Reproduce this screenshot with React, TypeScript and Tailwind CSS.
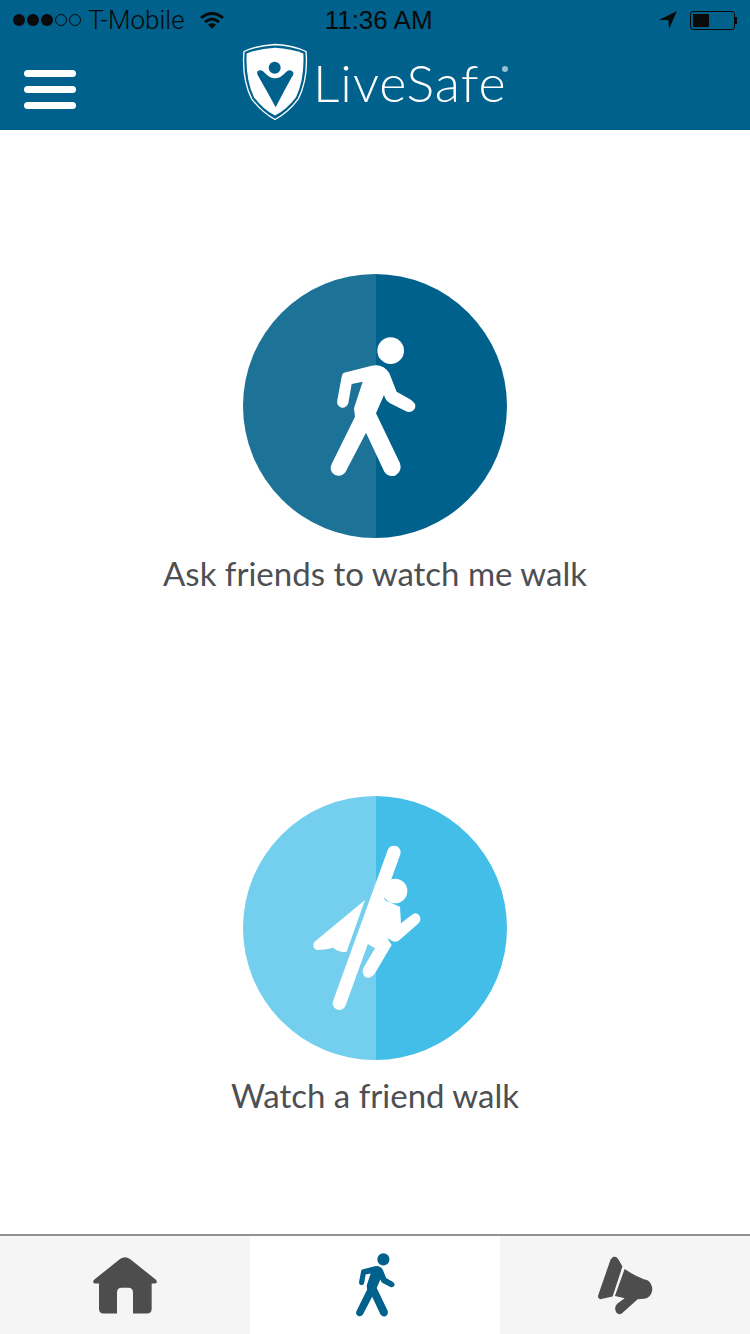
const lato = { fontFamily: '"Lato", "Noto Sans", sans-serif' }

function StatusBar() {
  return (
    <div className="flex h-10 items-center font-['Liberation_Sans',sans-serif] text-[#0a0a0a]">
      <div className="ml-[13px] flex items-center gap-[2px]">
        <span className="h-[12px] w-[12px] rounded-full bg-[#0a0a0a]" />
        <span className="h-[12px] w-[12px] rounded-full bg-[#0a0a0a]" />
        <span className="h-[12px] w-[12px] rounded-full bg-[#0a0a0a]" />
        <span className="h-[12px] w-[12px] rounded-full border border-[#0a0a0a]" />
        <span className="h-[12px] w-[12px] rounded-full border border-[#0a0a0a]" />
      </div>
      <span className="ml-[7px] font-['Roboto',sans-serif] text-[26px] font-light">T-Mobile</span>
      <svg className="ml-[14px]" width="26" height="20" viewBox="0 0 26 20">
        <path d="M1 7 Q13 -3 25 7 L23 9 Q13 1 3 9 Z" fill="#0a0a0a" />
        <path d="M5 11 Q13 4 21 11 L19 13 Q13 8 7 13 Z" fill="#0a0a0a" />
        <path d="M9 14.5 Q13 11.5 17 14.5 L13 19 Z" fill="#0a0a0a" />
      </svg>
      <span className="ml-[100px] text-[26px]">11:36 AM</span>
      <svg className="ml-[226px]" width="19" height="18" viewBox="0 0 19 18">
        <path d="M0 9 L18 0 L10 18 L9.5 9 Z" fill="#0a0a0a" />
      </svg>
      <div className="ml-[12px] flex items-center">
        <div className="h-[19px] w-[45px] rounded-[3px] border border-[#0a0a0a] p-[2px]">
          <div className="h-full w-[16px] bg-[#0a0a0a]" />
        </div>
        <div className="h-[7px] w-[2px] bg-[#0a0a0a]" />
      </div>
    </div>
  )
}

function ShieldLogo() {
  return (
    <svg width="68" height="79" viewBox="36 20 204 236">
      <path
        d="M135 27 Q190 30 228 48 Q235 130 205 190 Q175 230 135 252 Q95 230 65 190 Q35 130 42 48 Q80 30 135 27 Z"
        fill="none"
        stroke="#fff"
        strokeWidth="4"
      />
      <path
        d="M135 37 Q185 40 220 54 Q224 130 198 185 Q170 222 135 240 Q100 222 72 185 Q46 130 50 54 Q85 40 135 37 Z"
        fill="#fff"
      />
      <circle cx="134" cy="97" r="18" fill="#00618d" />
      <path
        d="M82 108 Q90 100 100 108 Q120 130 135 128 Q150 130 170 108 Q180 100 190 110 Q192 118 185 125 Q160 170 137 215 Q110 165 85 122 Q80 115 82 108 Z"
        fill="#00618d"
      />
    </svg>
  )
}

function Header() {
  return (
    <header className="h-[130px] shrink-0 bg-[#00618d]">
      <StatusBar />
      <div className="flex items-start">
        <div className="ml-6 mt-[30px] flex w-[52px] flex-col gap-[9px]">
          <div className="h-[7px] rounded-full bg-white" />
          <div className="h-[7px] rounded-full bg-white" />
          <div className="h-[7px] rounded-full bg-white" />
        </div>
        <div className="ml-[166px] mt-[2px]">
          <ShieldLogo />
        </div>
        <div
          className="relative ml-[3px] mt-[9px] text-[52px] font-light leading-[66px] tracking-[1px] text-white"
          style={lato}
        >
          LiveSafe
          <span className="absolute right-[-1px] top-[17px] h-[6px] w-[6px] rounded-full bg-white/60" />
        </div>
      </div>
    </header>
  )
}

function Walker({ className, viewBox, fill }: { className?: string; viewBox: string; fill: string }) {
  return (
    <svg className={className} viewBox={viewBox} fill={fill}>
      <circle cx="272" cy="92" r="40" />
      <path d="M132 158 L215 137 Q250 130 268 160 L290 215 L330 238 Q350 250 345 265 Q335 282 315 272 L270 250 Q255 240 252 225 L228 280 L300 430 Q308 455 285 467 Q265 472 253 455 L198 338 L137 455 Q125 472 105 465 Q85 452 95 432 L165 290 L162 265 L188 185 L155 192 L145 250 Q138 265 125 263 Q108 258 112 240 L125 170 Q127 160 132 158 Z" />
    </svg>
  )
}

function Hero({ className }: { className?: string }) {
  return (
    <svg className={className} viewBox="0 0 450 558" fill="#fff">
      <path d="M282 52 L118 505" stroke="#fff" strokeWidth="40" strokeLinecap="round" />
      <circle cx="285" cy="168" r="37" />
      <path d="M240 175 L258 197 L300 215 L303 265 L335 240 Q350 228 360 245 Q365 258 350 270 L295 318 Q280 325 268 312 L262 310 L275 330 L225 415 Q210 435 195 425 Q183 412 192 395 L225 340 L200 325 L170 320 Z" />
      <path d="M195 195 L42 322 Q35 340 50 345 Q75 345 100 338 Q120 355 140 350 Z" />
    </svg>
  )
}

function WalkOption({
  label,
  leftClass,
  rightClass,
  children,
}: {
  label: string
  leftClass: string
  rightClass: string
  children: React.ReactNode
}) {
  return (
    <div className="flex flex-col items-center">
      <div className="relative flex h-[264px] w-[264px] overflow-hidden rounded-full">
        <div className={`w-[133px] ${leftClass}`} />
        <div className={`flex-1 ${rightClass}`} />
        <div className="absolute inset-0 flex items-center justify-center">{children}</div>
      </div>
      <div className="mt-[13px] text-[33px] leading-[44px] text-[#4d4f53]" style={lato}>
        {label}
      </div>
    </div>
  )
}

function TabBar() {
  return (
    <nav className="grid h-[100px] shrink-0 grid-cols-3 border-t-2 border-[#8d9296]">
      <div className="flex items-center justify-center bg-[#f5f5f5]">
        <svg width="64" height="57" viewBox="36 33 192 170" fill="#4d4d4d">
          <path d="M118 38 Q132 28 146 38 L224 100 Q232 110 222 112 L212 112 L212 188 Q212 202 198 202 L156 202 L156 140 Q156 125 142 125 L122 125 Q108 125 108 140 L108 202 L68 202 Q54 202 54 188 L54 112 L42 112 Q32 110 40 100 Z" />
        </svg>
      </div>
      <div className="flex items-center justify-center bg-white">
        <Walker className="h-[64px] w-[41px]" viewBox="90 50 260 422" fill="#00618d" />
      </div>
      <div className="flex items-center justify-center bg-[#f5f5f5]">
        <svg width="56" height="61" viewBox="30 24 172 184" fill="#4d4d4d">
          <path d="M80 28 Q90 25 97 38 L108 58 L78 150 L40 158 Q30 155 34 145 L72 35 Z" />
          <path d="M115 65 Q150 90 185 100 Q200 110 200 130 Q195 155 175 157 L155 158 L105 203 Q90 208 86 190 Q85 178 92 172 L115 155 L85 148 Z" />
        </svg>
      </div>
    </nav>
  )
}

export default function App() {
  return (
    <div className="flex h-[1334px] w-[750px] flex-col bg-white">
      <Header />
      <main className="flex flex-1 flex-col items-center gap-[201px] pt-[144px]">
        <WalkOption label="Ask friends to watch me walk" leftClass="bg-[#1c7297]" rightClass="bg-[#00618d]">
          <Walker className="h-[170px] w-[150px]" viewBox="0 3 450 510" fill="#fff" />
        </WalkOption>
        <WalkOption label="Watch a friend walk" leftClass="bg-[#74ceed]" rightClass="bg-[#43bee8]">
          <Hero className="h-[186px] w-[150px]" />
        </WalkOption>
      </main>
      <TabBar />
    </div>
  )
}
